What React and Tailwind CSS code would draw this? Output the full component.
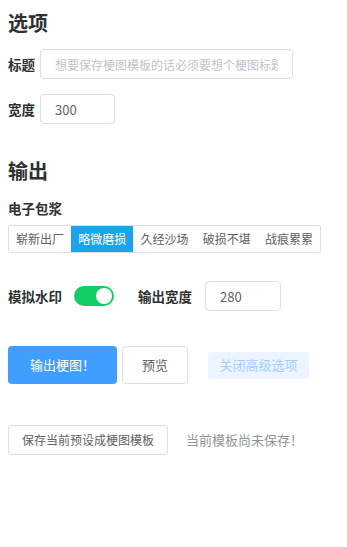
import React, { useState } from 'react';

const tabs = ['崭新出厂', '略微磨损', '久经沙场', '破损不堪', '战痕累累'];

function App() {
  const [wear, setWear] = useState(1);
  const [mark, setMark] = useState(true);

  return (
    <div
      className="w-[347px] h-[547px] bg-white px-2 text-[#303133]"
      style={{ fontFamily: '"Noto Sans CJK SC", "Noto Sans", sans-serif' }}
    >
      {/* 选项 */}
      <h2 className="pt-[9px] text-[20px] font-bold leading-[28px]">选项</h2>

      <div className="mt-[12px] flex items-center">
        <label className="w-[32px] text-[13.5px] font-bold">标题</label>
        <input
          className="h-[30px] w-[253px] rounded-[4px] border border-[#dcdfe6] px-[14px] text-[12px] text-[#606266] placeholder:text-[#c0c4cc] outline-none"
          placeholder="想要保存梗图模板的话必须要想个梗图标题哦"
        />
      </div>

      <div className="mt-[15px] flex items-center">
        <label className="w-[32px] text-[13.5px] font-bold">宽度</label>
        <input
          className="h-[30px] w-[75px] rounded-[4px] border border-[#dcdfe6] px-[14px] text-[13px] text-[#606266] outline-none"
          defaultValue="300"
        />
      </div>

      {/* 输出 */}
      <h2 className="mt-[33px] text-[20px] font-bold leading-[28px]">输出</h2>

      <div className="mt-[14px] text-[13.5px] font-bold leading-[18px]">电子包浆</div>

      <div className="mt-[8px] flex w-[313px] rounded-[2px] border border-[#dcdfe6]">
        {tabs.map((t, i) => (
          <button
            key={t}
            onClick={() => setWear(i)}
            className={
              'h-[26px] flex-1 text-[12px] ' +
              (wear === i ? 'bg-[#1aa3ef] text-white' : 'bg-white text-[#606266]')
            }
          >
            {t}
          </button>
        ))}
      </div>

      <div className="mt-[28px] flex items-center">
        <span className="text-[13.5px] font-bold">模拟水印</span>
        <button
          onClick={() => setMark(!mark)}
          className={
            'ml-[12px] flex h-[20px] w-[40px] items-center rounded-full px-[2px] ' +
            (mark ? 'justify-end bg-[#13ce66]' : 'justify-start bg-[#dcdfe6]')
          }
        >
          <span className="h-[16px] w-[16px] rounded-full bg-white" />
        </button>
        <span className="ml-[24px] text-[13.5px] font-bold">输出宽度</span>
        <input
          className="ml-[13px] h-[30px] w-[76px] rounded-[4px] border border-[#dcdfe6] px-[14px] text-[13px] text-[#606266] outline-none"
          defaultValue="280"
        />
      </div>

      <div className="mt-[35px] flex items-center">
        <button className="h-[38px] w-[109px] rounded-[4px] bg-[#409eff] text-[13px] text-white">
          输出梗图！
        </button>
        <button className="ml-[5px] h-[38px] w-[66px] rounded-[4px] border border-[#dcdfe6] bg-white text-[13px] text-[#606266]">
          预览
        </button>
        <button className="ml-[20px] h-[27px] w-[101px] rounded-[3px] bg-[#ecf5ff] text-[13px] text-[#a0cfff]">
          关闭高级选项
        </button>
      </div>

      <div className="mt-[41px] flex items-center">
        <button className="h-[30px] w-[160px] rounded-[3px] border border-[#dcdfe6] bg-white text-[12px] text-[#606266]">
          保存当前预设成梗图模板
        </button>
        <span className="ml-[18px] text-[13px] text-[#909399]">当前模板尚未保存！</span>
      </div>
    </div>
  );
}

export default App;
